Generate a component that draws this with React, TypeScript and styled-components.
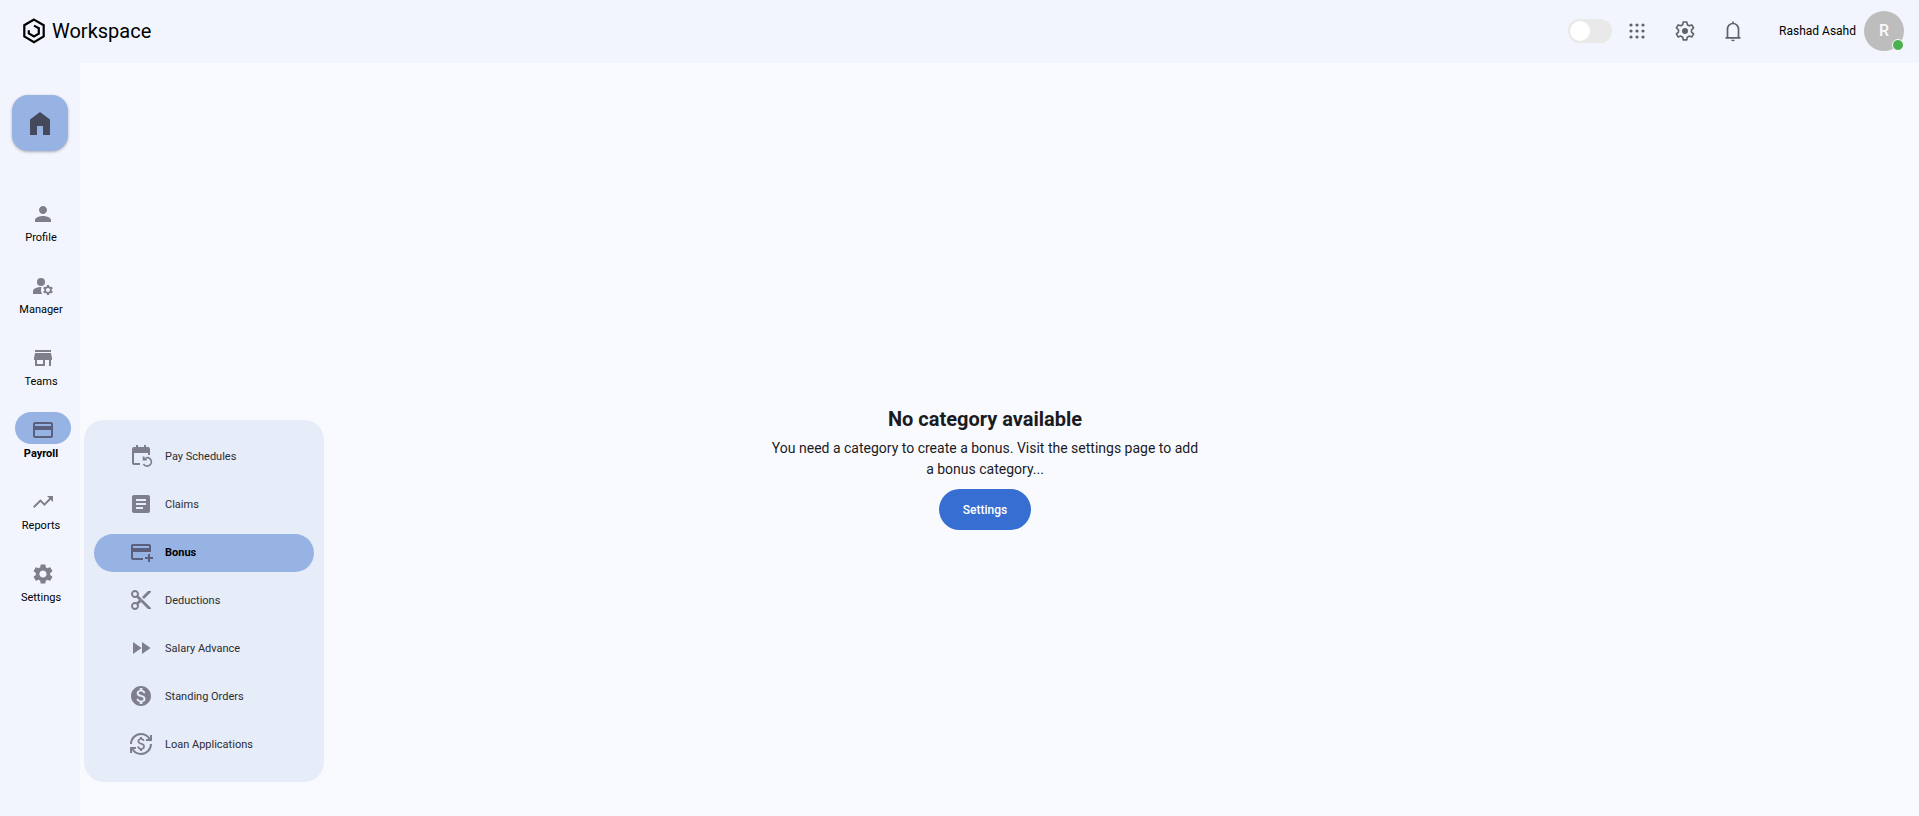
import React from "react";
import styled, { createGlobalStyle, css } from "styled-components";
import {
  MdAddCard, MdArticle, MdContentCut, MdCurrencyExchange, MdFastForward,
  MdManageAccounts, MdMonetizationOn, MdPayment, MdPerson, MdSettings, MdStore, MdTrendingUp,
} from "react-icons/md";

const GlobalStyle = createGlobalStyle`
  * { box-sizing: border-box; }
  body { margin: 0; background: #f8fafe; font-family: Roboto, "Liberation Sans", sans-serif; color: #000; }
  button { font: inherit; border: 0; background: none; padding: 0; cursor: pointer; }
  a { color: inherit; text-decoration: none; }
`;

const Page = styled.div`
  display: flex;
  flex-direction: column;
  min-height: 100vh;
`;

const Header = styled.header`
  display: flex;
  align-items: center;
  justify-content: space-between;
  height: 63px;
  padding: 0 15px 1px 22px;
  background: #f2f5fd;
`;

const Brand = styled.a`
  display: flex;
  align-items: center;
  gap: 6px;
  font-size: 20px;
  line-height: 24px;
`;

const Tools = styled.div`
  display: flex;
  align-items: center;
`;

const Switch = styled.input`
  appearance: none;
  width: 44px;
  height: 24px;
  margin: 0 13px 0 0;
  padding: 2px;
  border-radius: 12px;
  background: #e9e9e9;
  cursor: pointer;
  &::before {
    content: "";
    display: block;
    width: 20px;
    height: 20px;
    border-radius: 50%;
    background: #fff;
  }
  &:checked::before { margin-left: 20px; }
`;

const ToolButton = styled.button`
  display: flex;
  align-items: center;
  justify-content: center;
  width: 24px;
  height: 24px;
  margin-right: 24px;
  color: #5f6368;
`;

const User = styled.a`
  display: flex;
  align-items: center;
  gap: 8px;
  margin-left: 10px;
  font-size: 12px;
  line-height: 16px;
`;

const Avatar = styled.span`
  position: relative;
  display: flex;
  align-items: center;
  justify-content: center;
  width: 40px;
  height: 40px;
  border-radius: 50%;
  background: #bdbdbd;
  color: #fafafa;
  font-size: 16px;
  font-weight: 500;
`;

const Presence = styled.span`
  position: absolute;
  right: 0;
  bottom: 0;
  width: 12px;
  height: 12px;
  border: 1px solid #fff;
  border-radius: 50%;
  background: #4caf50;
`;

const Body = styled.div`
  display: flex;
  flex: 1;
`;

const Rail = styled.nav`
  display: flex;
  flex-direction: column;
  align-items: center;
  width: 80px;
  padding-top: 32px;
  background: #f2f5fd;
`;

const HomeButton = styled.a`
  display: flex;
  align-items: center;
  justify-content: center;
  width: 56px;
  height: 56px;
  margin-bottom: 42px;
  border-radius: 16px;
  background: #96b3e3;
  box-shadow: 0 1px 3px rgba(0, 0, 0, 0.3);
  color: #45495c;
`;

const RailItem = styled.a<{ $active?: boolean }>`
  display: flex;
  flex-direction: column;
  align-items: center;
  width: 80px;
  height: 72px;
  padding: 3px 0 0 2px;
  font-size: 11px;
  line-height: 16px;
  ${(p) => p.$active && css`font-weight: 700;`}
`;

const RailIcon = styled.span<{ $active?: boolean }>`
  display: flex;
  align-items: center;
  justify-content: center;
  width: 56px;
  height: 32px;
  margin: 0 0 2px 4px;
  padding-top: 4px;
  border-radius: 16px;
  color: ${(p) => (p.$active ? "#5a5f7d" : "#7f7e8d")};
  background: ${(p) => (p.$active ? "#96b3e3" : "transparent")};
`;

const Submenu = styled.nav`
  align-self: flex-end;
  display: flex;
  flex-direction: column;
  gap: 10px;
  width: 240px;
  margin: 0 0 34px 4px;
  padding: 18px 10px;
  border-radius: 20px;
  background: #e6ecf8;
`;

const SubmenuItem = styled.a<{ $active?: boolean }>`
  display: flex;
  align-items: center;
  gap: 12px;
  height: 38px;
  padding-left: 35px;
  border-radius: 19px;
  font-size: 11px;
  line-height: 16px;
  color: ${(p) => (p.$active ? "#000" : "#2b2d33")};
  font-weight: ${(p) => (p.$active ? 700 : 400)};
  background: ${(p) => (p.$active ? "#96b3e3" : "transparent")};
  svg {
    margin-bottom: 2px;
    color: ${(p) => (p.$active ? "#5a5f7d" : "#7f7e8d")};
  }
`;

const Main = styled.main`
  flex: 1;
  display: flex;
  flex-direction: column;
  align-items: center;
  justify-content: center;
  padding: 58px 273px 0 0;
  text-align: center;
`;

const Title = styled.h1`
  margin: 0 0 7px;
  font-size: 20px;
  line-height: 24px;
  font-weight: 700;
  color: #1b1b1f;
`;

const Message = styled.p`
  max-width: 432px;
  margin: 0 0 9px;
  font-size: 14px;
  line-height: 21px;
  color: #1b1b1f;
`;

const Action = styled.button`
  height: 41px;
  padding: 0 24px;
  border-radius: 21px;
  background: #366fd1;
  color: #fff;
  font-size: 12px;
  font-weight: 500;
`;

const LogoIcon = () => (
  <svg width="24" height="26" viewBox="0 0 24 26" fill="none" stroke="currentColor" strokeWidth="2.2" aria-hidden="true">
    <path d="M12 1.600 21.700 7.200v11.200L12 24.200 2.300 18.400V7.200z" />
    <path d="M12 7.600 16.800 10.200v5.400L12 18.400l-5.200-3v-3.200" />
  </svg>
);

const HomeIcon = () => (
  <svg width="20" height="23" viewBox="0 0 20 23" fill="currentColor" aria-hidden="true">
    <path d="M0 23V7.500L10 0l10 7.500V23h-7v-9H7v9z" />
  </svg>
);

const AppsIcon = () => (
  <svg width="24" height="24" viewBox="0 0 24 24" fill="currentColor" aria-hidden="true">
    {[6, 12, 18].map((y) => [6, 12, 18].map((x) => <circle key={`${x}-${y}`} cx={x} cy={y} r="1.600" />))}
  </svg>
);

const GearIcon = () => (
  <svg width="24" height="24" viewBox="0 0 24 24" fill="currentColor" aria-hidden="true">
    <path fill="none" stroke="currentColor" strokeWidth="1.600" strokeLinejoin="round" d="M10.200 3h3.600l.5 2.700 1.900 1.100 2.600-.9 1.800 3.100-2.100 1.800v2.300l2.100 1.800-1.800 3.100-2.600-.9-1.900 1.100-.5 2.700h-3.600l-.5-2.700-1.900-1.100-2.600.9L3.400 14.900l2.100-1.800v-2.300L3.400 9l1.800-3.100 2.600.9 1.900-1.100z" />
    <circle cx="12" cy="12" r="3" />
  </svg>
);

const BellIcon = () => (
  <svg width="24" height="24" viewBox="0 0 24 24" fill="none" stroke="currentColor" strokeWidth="1.700" aria-hidden="true">
    <path d="M4.500 18.800h15M6.500 18.800V10a5.500 5.500 0 0 1 11 0v8.800M12 4.500V2.500" />
    <path d="M10.200 20.700h3.600a1.800 1.500 0 0 1-3.600 0z" fill="currentColor" stroke="none" />
  </svg>
);

const ScheduleIcon = () => (
  <svg width="24" height="24" viewBox="0 0 24 24" fill="none" stroke="currentColor" aria-hidden="true">
    <path fill="currentColor" stroke="none" d="M5 3h2V1h2v2h6V1h2v2h2a2 2 0 0 1 2 2v6h-2V9H5v10h6v2H5a2 2 0 0 1-2-2V5a2 2 0 0 1 2-2z" />
    <path strokeWidth="1.600" d="M14.500 12.500v3.300h3.300M14.700 15.600a4.200 4.200 0 1 1-.2 4.200" />
  </svg>
);

const railItems = [
  { label: "Profile", icon: <MdPerson size={24} /> },
  { label: "Manager", icon: <MdManageAccounts size={24} /> },
  { label: "Teams", icon: <MdStore size={24} /> },
  { label: "Payroll", icon: <MdPayment size={24} />, active: true },
  { label: "Reports", icon: <MdTrendingUp size={24} /> },
  { label: "Settings", icon: <MdSettings size={24} /> },
];

const submenuItems = [
  { label: "Pay Schedules", icon: <ScheduleIcon /> },
  { label: "Claims", icon: <MdArticle size={24} /> },
  { label: "Bonus", icon: <MdAddCard size={24} />, active: true },
  { label: "Deductions", icon: <MdContentCut size={24} /> },
  { label: "Salary Advance", icon: <MdFastForward size={24} /> },
  { label: "Standing Orders", icon: <MdMonetizationOn size={24} /> },
  { label: "Loan Applications", icon: <MdCurrencyExchange size={24} /> },
];

export default function App() {
  return (
    <Page>
      <GlobalStyle />
      <Header>
        <Brand href="#"><LogoIcon />Workspace</Brand>
        <Tools>
          <Switch type="checkbox" role="switch" aria-label="Dark mode" />
          <ToolButton aria-label="Apps"><AppsIcon /></ToolButton>
          <ToolButton aria-label="Preferences"><GearIcon /></ToolButton>
          <ToolButton aria-label="Notifications"><BellIcon /></ToolButton>
          <User href="#">Rashad Asahd<Avatar>R<Presence /></Avatar></User>
        </Tools>
      </Header>
      <Body>
        <Rail aria-label="Main">
          <HomeButton href="#" aria-label="Home"><HomeIcon /></HomeButton>
          {railItems.map((item) => (
            <RailItem key={item.label} href="#" $active={item.active}>
              <RailIcon $active={item.active}>{item.icon}</RailIcon>
              {item.label}
            </RailItem>
          ))}
        </Rail>
        <Submenu aria-label="Payroll">
          {submenuItems.map((item) => (
            <SubmenuItem key={item.label} href="#" $active={item.active}>
              {item.icon}
              {item.label}
            </SubmenuItem>
          ))}
        </Submenu>
        <Main>
          <Title>No category available</Title>
          <Message>You need a category to create a bonus. Visit the settings page to add a bonus category...</Message>
          <Action>Settings</Action>
        </Main>
      </Body>
    </Page>
  );
}
